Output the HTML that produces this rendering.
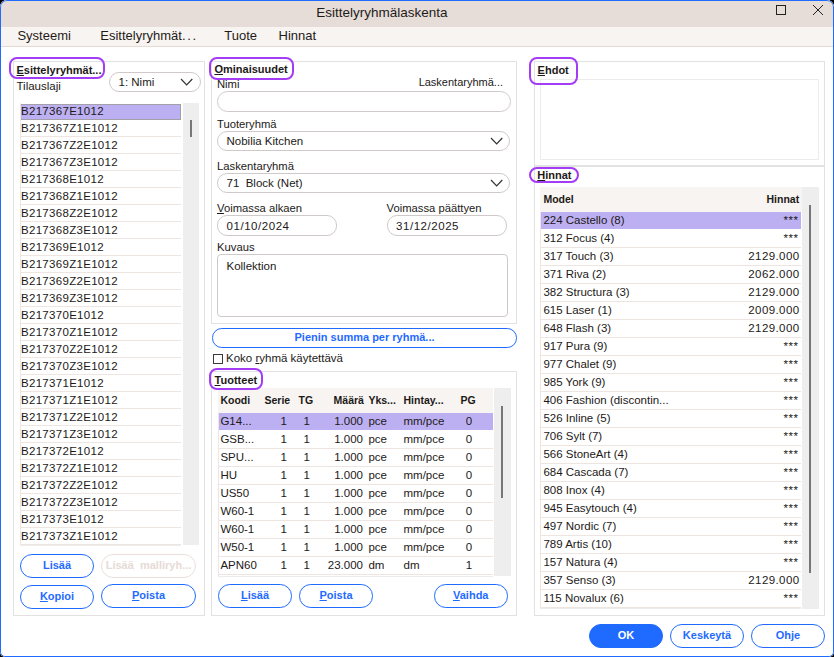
<!DOCTYPE html><html><head><meta charset="utf-8"><style>
html,body{margin:0;padding:0;background:#000;width:834px;height:657px;overflow:hidden}
#win{position:absolute;left:0;top:0;width:834px;height:657px;border-radius:7px 7px 5px 5px;background:#fff;overflow:hidden;font-family:"Liberation Sans",sans-serif}
#frame{position:absolute;left:0;top:0;width:834px;height:657px;box-sizing:border-box;border:1px solid #1f6bff;border-radius:7px 7px 5px 5px}
.t{position:absolute;white-space:nowrap;line-height:1}
.b{position:absolute;box-sizing:border-box}
u{text-decoration:underline;text-decoration-thickness:1px;text-underline-offset:1px}
</style></head><body><div id="win">
<div class="b" style="left:-1px;top:-1px;width:836px;height:28px;background:#e6ddd8"></div>
<div class="t " style="left:316.3px;top:5px;line-height:15px;font-size:13.5px;font-weight:normal;color:#1f1b19;">Esittelyryhmälaskenta</div>
<div class="b" style="left:776px;top:5px;width:10px;height:10px;border:1px solid #222"></div>
<svg class="b" style="left:812px;top:4px" width="12" height="12" viewBox="0 0 12 12"><path d="M1 1L11 11M11 1L1 11" stroke="#222" stroke-width="1"/></svg>
<div class="b" style="left:-1px;top:27px;width:836px;height:20px;background:#f8f4f1;border-bottom:1px solid #e6dad3"></div>
<div class="t " style="left:17.4px;top:28px;line-height:15px;font-size:13px;font-weight:normal;color:#1f1b19;">Systeemi</div>
<div class="t " style="left:100.3px;top:28px;line-height:15px;font-size:13px;font-weight:normal;color:#1f1b19;">Esittelyryhmät<span style="letter-spacing:1.6px">..</span>.</div>
<div class="t " style="left:224.3px;top:28px;line-height:15px;font-size:13px;font-weight:normal;color:#1f1b19;">Tuote</div>
<div class="t " style="left:278.6px;top:28px;line-height:15px;font-size:13px;font-weight:normal;color:#1f1b19;">Hinnat</div>
<div class="b" style="left:13px;top:61px;width:192px;height:555px;border:1px solid #e2e2e2"></div>
<div class="b" style="left:9px;top:57px;width:96px;height:22px;border:2px solid #a43cf5;border-radius:8px;z-index:5"></div>
<div class="t " style="left:16.5px;top:64px;line-height:12px;font-size:11px;font-weight:bold;color:#1c1917;"><u>E</u>sittelyryhmät...</div>
<div class="t " style="left:16.5px;top:80px;line-height:12px;font-size:11.5px;font-weight:normal;color:#1c1917;">Tilauslaji</div>
<div class="b" style="left:109px;top:72px;width:92px;height:20px;border:1px solid #cfcac7;border-radius:10px;background:#fff"></div>
<div class="t " style="left:118.5px;top:76px;line-height:12px;font-size:11.5px;font-weight:normal;color:#1c1917;">1: Nimi</div>
<svg class="b" style="left:179.2px;top:77.2px" width="15.3" height="9.8" viewBox="0 0 15.3 9.8"><path d="M2 2 L7.65 7.8 L13.3 2" fill="none" stroke="#333" stroke-width="1.2"/></svg>
<div class="b" style="left:20px;top:104px;width:161px;height:16px;background:#bdb0f2;border:1px solid #a3a0a8"></div>
<div class="t " style="left:21px;top:105px;line-height:12px;font-size:11.5px;font-weight:normal;color:#1c1917;letter-spacing:0.3px">B217367E1012</div>
<div class="b" style="left:20px;top:120px;width:161px;height:17px;border-bottom:1px solid #efe5e0"></div>
<div class="t " style="left:21px;top:122px;line-height:12px;font-size:11.5px;font-weight:normal;color:#1c1917;letter-spacing:0.3px">B217367Z1E1012</div>
<div class="b" style="left:20px;top:137px;width:161px;height:17px;border-bottom:1px solid #efe5e0"></div>
<div class="t " style="left:21px;top:139px;line-height:12px;font-size:11.5px;font-weight:normal;color:#1c1917;letter-spacing:0.3px">B217367Z2E1012</div>
<div class="b" style="left:20px;top:154px;width:161px;height:17px;border-bottom:1px solid #efe5e0"></div>
<div class="t " style="left:21px;top:156px;line-height:12px;font-size:11.5px;font-weight:normal;color:#1c1917;letter-spacing:0.3px">B217367Z3E1012</div>
<div class="b" style="left:20px;top:171px;width:161px;height:17px;border-bottom:1px solid #efe5e0"></div>
<div class="t " style="left:21px;top:173px;line-height:12px;font-size:11.5px;font-weight:normal;color:#1c1917;letter-spacing:0.3px">B217368E1012</div>
<div class="b" style="left:20px;top:188px;width:161px;height:17px;border-bottom:1px solid #efe5e0"></div>
<div class="t " style="left:21px;top:190px;line-height:12px;font-size:11.5px;font-weight:normal;color:#1c1917;letter-spacing:0.3px">B217368Z1E1012</div>
<div class="b" style="left:20px;top:205px;width:161px;height:17px;border-bottom:1px solid #efe5e0"></div>
<div class="t " style="left:21px;top:207px;line-height:12px;font-size:11.5px;font-weight:normal;color:#1c1917;letter-spacing:0.3px">B217368Z2E1012</div>
<div class="b" style="left:20px;top:222px;width:161px;height:17px;border-bottom:1px solid #efe5e0"></div>
<div class="t " style="left:21px;top:224px;line-height:12px;font-size:11.5px;font-weight:normal;color:#1c1917;letter-spacing:0.3px">B217368Z3E1012</div>
<div class="b" style="left:20px;top:239px;width:161px;height:17px;border-bottom:1px solid #efe5e0"></div>
<div class="t " style="left:21px;top:241px;line-height:12px;font-size:11.5px;font-weight:normal;color:#1c1917;letter-spacing:0.3px">B217369E1012</div>
<div class="b" style="left:20px;top:256px;width:161px;height:17px;border-bottom:1px solid #efe5e0"></div>
<div class="t " style="left:21px;top:258px;line-height:12px;font-size:11.5px;font-weight:normal;color:#1c1917;letter-spacing:0.3px">B217369Z1E1012</div>
<div class="b" style="left:20px;top:273px;width:161px;height:17px;border-bottom:1px solid #efe5e0"></div>
<div class="t " style="left:21px;top:275px;line-height:12px;font-size:11.5px;font-weight:normal;color:#1c1917;letter-spacing:0.3px">B217369Z2E1012</div>
<div class="b" style="left:20px;top:290px;width:161px;height:17px;border-bottom:1px solid #efe5e0"></div>
<div class="t " style="left:21px;top:292px;line-height:12px;font-size:11.5px;font-weight:normal;color:#1c1917;letter-spacing:0.3px">B217369Z3E1012</div>
<div class="b" style="left:20px;top:307px;width:161px;height:17px;border-bottom:1px solid #efe5e0"></div>
<div class="t " style="left:21px;top:309px;line-height:12px;font-size:11.5px;font-weight:normal;color:#1c1917;letter-spacing:0.3px">B217370E1012</div>
<div class="b" style="left:20px;top:324px;width:161px;height:17px;border-bottom:1px solid #efe5e0"></div>
<div class="t " style="left:21px;top:326px;line-height:12px;font-size:11.5px;font-weight:normal;color:#1c1917;letter-spacing:0.3px">B217370Z1E1012</div>
<div class="b" style="left:20px;top:341px;width:161px;height:17px;border-bottom:1px solid #efe5e0"></div>
<div class="t " style="left:21px;top:343px;line-height:12px;font-size:11.5px;font-weight:normal;color:#1c1917;letter-spacing:0.3px">B217370Z2E1012</div>
<div class="b" style="left:20px;top:358px;width:161px;height:17px;border-bottom:1px solid #efe5e0"></div>
<div class="t " style="left:21px;top:360px;line-height:12px;font-size:11.5px;font-weight:normal;color:#1c1917;letter-spacing:0.3px">B217370Z3E1012</div>
<div class="b" style="left:20px;top:375px;width:161px;height:17px;border-bottom:1px solid #efe5e0"></div>
<div class="t " style="left:21px;top:377px;line-height:12px;font-size:11.5px;font-weight:normal;color:#1c1917;letter-spacing:0.3px">B217371E1012</div>
<div class="b" style="left:20px;top:392px;width:161px;height:17px;border-bottom:1px solid #efe5e0"></div>
<div class="t " style="left:21px;top:394px;line-height:12px;font-size:11.5px;font-weight:normal;color:#1c1917;letter-spacing:0.3px">B217371Z1E1012</div>
<div class="b" style="left:20px;top:409px;width:161px;height:17px;border-bottom:1px solid #efe5e0"></div>
<div class="t " style="left:21px;top:411px;line-height:12px;font-size:11.5px;font-weight:normal;color:#1c1917;letter-spacing:0.3px">B217371Z2E1012</div>
<div class="b" style="left:20px;top:426px;width:161px;height:17px;border-bottom:1px solid #efe5e0"></div>
<div class="t " style="left:21px;top:428px;line-height:12px;font-size:11.5px;font-weight:normal;color:#1c1917;letter-spacing:0.3px">B217371Z3E1012</div>
<div class="b" style="left:20px;top:443px;width:161px;height:17px;border-bottom:1px solid #efe5e0"></div>
<div class="t " style="left:21px;top:445px;line-height:12px;font-size:11.5px;font-weight:normal;color:#1c1917;letter-spacing:0.3px">B217372E1012</div>
<div class="b" style="left:20px;top:460px;width:161px;height:17px;border-bottom:1px solid #efe5e0"></div>
<div class="t " style="left:21px;top:462px;line-height:12px;font-size:11.5px;font-weight:normal;color:#1c1917;letter-spacing:0.3px">B217372Z1E1012</div>
<div class="b" style="left:20px;top:477px;width:161px;height:17px;border-bottom:1px solid #efe5e0"></div>
<div class="t " style="left:21px;top:479px;line-height:12px;font-size:11.5px;font-weight:normal;color:#1c1917;letter-spacing:0.3px">B217372Z2E1012</div>
<div class="b" style="left:20px;top:494px;width:161px;height:17px;border-bottom:1px solid #efe5e0"></div>
<div class="t " style="left:21px;top:496px;line-height:12px;font-size:11.5px;font-weight:normal;color:#1c1917;letter-spacing:0.3px">B217372Z3E1012</div>
<div class="b" style="left:20px;top:511px;width:161px;height:17px;border-bottom:1px solid #efe5e0"></div>
<div class="t " style="left:21px;top:513px;line-height:12px;font-size:11.5px;font-weight:normal;color:#1c1917;letter-spacing:0.3px">B217373E1012</div>
<div class="b" style="left:20px;top:528px;width:161px;height:17px;border-bottom:1px solid #efe5e0"></div>
<div class="t " style="left:21px;top:530px;line-height:12px;font-size:11.5px;font-weight:normal;color:#1c1917;letter-spacing:0.3px">B217373Z1E1012</div>
<div class="b" style="left:20px;top:103px;width:1px;height:442px;background:#ede6e2"></div>
<div class="b" style="left:20px;top:545px;width:161px;height:1px;background:#ececec"></div>
<div class="b" style="left:183px;top:103px;width:16px;height:442px;background:#eeeeee"></div>
<div class="b" style="left:190px;top:120px;width:2px;height:17px;background:#777"></div>
<div class="b btn" style="left:20px;top:554px;width:74px;height:24px;border-radius:12.0px;background:#fff;border:1px solid #1f6bff;"></div>
<div class="t" style="left:-93.0px;width:300px;text-align:center;top:559px;line-height:12px;font-size:11px;font-weight:bold;color:#1f6bff;">Lisää</div>
<div class="b btn" style="left:101px;top:554px;width:95px;height:24px;border-radius:12.0px;background:#fff;border:1px solid #eadfd9;"></div>
<div class="t" style="left:-1.5px;width:300px;text-align:center;top:559px;line-height:12px;font-size:11px;font-weight:bold;color:#e6dbd5;">Lisää&nbsp; malliryh...</div>
<div class="b btn" style="left:20px;top:585px;width:74px;height:24px;border-radius:12.0px;background:#fff;border:1px solid #1f6bff;"></div>
<div class="t" style="left:-93.0px;width:300px;text-align:center;top:590px;line-height:12px;font-size:11px;font-weight:bold;color:#1f6bff;"><u>K</u>opioi</div>
<div class="b btn" style="left:101px;top:584px;width:95px;height:24px;border-radius:12.0px;background:#fff;border:1px solid #1f6bff;"></div>
<div class="t" style="left:-1.5px;width:300px;text-align:center;top:589px;line-height:12px;font-size:11px;font-weight:bold;color:#1f6bff;"><u>P</u>oista</div>
<div class="b" style="left:211px;top:61px;width:306px;height:263px;border:1px solid #e2e2e2"></div>
<div class="b" style="left:208.5px;top:57px;width:85px;height:23px;border:2px solid #a43cf5;border-radius:8px;z-index:5"></div>
<div class="t " style="left:214.4px;top:63px;line-height:12px;font-size:11px;font-weight:bold;color:#1c1917;"><u>O</u>minaisuudet</div>
<div class="t " style="left:217px;top:78px;line-height:12px;font-size:11.25px;font-weight:normal;color:#1c1917;">Nimi</div>
<div class="t" style="right:331px;top:76px;line-height:12px;font-size:11px;font-weight:normal;color:#1c1917;text-align:right;">Laskentaryhmä...</div>
<div class="b" style="left:217px;top:91px;width:294px;height:21px;border:1px solid #cfcac7;border-radius:10.5px"></div>
<div class="t " style="left:217px;top:118px;line-height:12px;font-size:11.25px;font-weight:normal;color:#1c1917;">Tuoteryhmä</div>
<div class="b" style="left:217px;top:131px;width:293px;height:20px;border:1px solid #cfcac7;border-radius:10px"></div>
<div class="t " style="left:226.5px;top:135px;line-height:12px;font-size:11.5px;font-weight:normal;color:#1c1917;">Nobilia Kitchen</div>
<svg class="b" style="left:488.5px;top:136.2px" width="15.3" height="9.8" viewBox="0 0 15.3 9.8"><path d="M2 2 L7.65 7.8 L13.3 2" fill="none" stroke="#333" stroke-width="1.2"/></svg>
<div class="t " style="left:217px;top:160px;line-height:12px;font-size:11.25px;font-weight:normal;color:#1c1917;">Laskentaryhmä</div>
<div class="b" style="left:217px;top:173px;width:293px;height:20px;border:1px solid #cfcac7;border-radius:10px"></div>
<div class="t " style="left:226.5px;top:177px;line-height:12px;font-size:11.5px;font-weight:normal;color:#1c1917;">71&nbsp; Block (Net)</div>
<svg class="b" style="left:488.5px;top:178.2px" width="15.3" height="9.8" viewBox="0 0 15.3 9.8"><path d="M2 2 L7.65 7.8 L13.3 2" fill="none" stroke="#333" stroke-width="1.2"/></svg>
<div class="t " style="left:217px;top:202px;line-height:12px;font-size:11.25px;font-weight:normal;color:#1c1917;"><u>V</u>oimassa alkaen</div>
<div class="t " style="left:386.5px;top:202px;line-height:12px;font-size:11.25px;font-weight:normal;color:#1c1917;">Voimassa päättyen</div>
<div class="b" style="left:217px;top:215px;width:119.5px;height:20.5px;border:1px solid #cfcac7;border-radius:10px"></div>
<div class="b" style="left:387px;top:215px;width:120px;height:20.5px;border:1px solid #cfcac7;border-radius:10px"></div>
<div class="t " style="left:226.5px;top:220px;line-height:12px;font-size:11.5px;font-weight:normal;color:#1c1917;letter-spacing:0.55px">01/10/2024</div>
<div class="t " style="left:396px;top:220px;line-height:12px;font-size:11.5px;font-weight:normal;color:#1c1917;letter-spacing:0.55px">31/12/2025</div>
<div class="t " style="left:217px;top:241px;line-height:12px;font-size:11.25px;font-weight:normal;color:#1c1917;">Kuvaus</div>
<div class="b" style="left:217px;top:254px;width:290.5px;height:62.5px;border:1px solid #cfcac7;border-radius:4px"></div>
<div class="t " style="left:226.5px;top:260px;line-height:12px;font-size:11.5px;font-weight:normal;color:#1c1917;">Kollektion</div>
<div class="b btn" style="left:212px;top:328px;width:305px;height:19.5px;border-radius:9.75px;background:#fff;border:1px solid #1f6bff;"></div>
<div class="t" style="left:214.5px;width:300px;text-align:center;top:331px;line-height:12px;font-size:11px;font-weight:bold;color:#1f6bff;">Pienin summa per ryhmä...</div>
<div class="b" style="left:213px;top:354px;width:10px;height:10px;border:1px solid #3a3a3a"></div>
<div class="t " style="left:226px;top:352px;line-height:12px;font-size:11.5px;font-weight:normal;color:#1c1917;">Koko <u>r</u>yhmä käytettävä</div>
<div class="b" style="left:211px;top:371px;width:306px;height:245px;border:1px solid #e2e2e2"></div>
<div class="b" style="left:208.5px;top:368px;width:54.5px;height:22px;border:2px solid #a43cf5;border-radius:8px;z-index:5"></div>
<div class="t " style="left:214.6px;top:374px;line-height:12px;font-size:11px;font-weight:bold;color:#1c1917;"><u>T</u>uotteet</div>
<div class="b" style="left:218px;top:388px;width:275px;height:25px;background:#f8f4f1"></div>
<div class="t " style="left:220.4px;top:394px;line-height:12px;font-size:10.5px;font-weight:bold;color:#1c1917;">Koodi</div>
<div class="t " style="left:264.5px;top:394px;line-height:12px;font-size:10.5px;font-weight:bold;color:#1c1917;">Serie</div>
<div class="t " style="left:298.5px;top:394px;line-height:12px;font-size:10.5px;font-weight:bold;color:#1c1917;">TG</div>
<div class="t " style="left:333.6px;top:394px;line-height:12px;font-size:10.5px;font-weight:bold;color:#1c1917;">Määrä</div>
<div class="t " style="left:368.4px;top:394px;line-height:12px;font-size:10.5px;font-weight:bold;color:#1c1917;">Yks...</div>
<div class="t " style="left:403.5px;top:394px;line-height:12px;font-size:10.5px;font-weight:bold;color:#1c1917;">Hintay...</div>
<div class="t " style="left:460.5px;top:394px;line-height:12px;font-size:10.5px;font-weight:bold;color:#1c1917;">PG</div>
<div class="b" style="left:218px;top:413px;width:275px;height:17px;background:#bdb0f2"></div>
<div class="t " style="left:220.4px;top:415px;line-height:12px;font-size:11.5px;font-weight:normal;color:#1c1917;">G14...</div>
<div class="t" style="right:547px;top:415px;line-height:12px;font-size:11.5px;font-weight:normal;color:#1c1917;text-align:right;">1</div>
<div class="t" style="right:524px;top:415px;line-height:12px;font-size:11.5px;font-weight:normal;color:#1c1917;text-align:right;">1</div>
<div class="t" style="right:471px;top:415px;line-height:12px;font-size:11.5px;font-weight:normal;color:#1c1917;text-align:right;">1.000</div>
<div class="t " style="left:368.4px;top:415px;line-height:12px;font-size:11.5px;font-weight:normal;color:#1c1917;">pce</div>
<div class="t " style="left:403.5px;top:415px;line-height:12px;font-size:11.5px;font-weight:normal;color:#1c1917;">mm/pce</div>
<div class="t" style="left:319px;width:300px;text-align:center;top:415px;line-height:12px;font-size:11.5px;font-weight:normal;color:#1c1917;">0</div>
<div class="b" style="left:218px;top:431px;width:275px;height:18px;border-bottom:1px solid #efe5e0"></div>
<div class="t " style="left:220.4px;top:433px;line-height:12px;font-size:11.5px;font-weight:normal;color:#1c1917;">GSB...</div>
<div class="t" style="right:547px;top:433px;line-height:12px;font-size:11.5px;font-weight:normal;color:#1c1917;text-align:right;">1</div>
<div class="t" style="right:524px;top:433px;line-height:12px;font-size:11.5px;font-weight:normal;color:#1c1917;text-align:right;">1</div>
<div class="t" style="right:471px;top:433px;line-height:12px;font-size:11.5px;font-weight:normal;color:#1c1917;text-align:right;">1.000</div>
<div class="t " style="left:368.4px;top:433px;line-height:12px;font-size:11.5px;font-weight:normal;color:#1c1917;">pce</div>
<div class="t " style="left:403.5px;top:433px;line-height:12px;font-size:11.5px;font-weight:normal;color:#1c1917;">mm/pce</div>
<div class="t" style="left:319px;width:300px;text-align:center;top:433px;line-height:12px;font-size:11.5px;font-weight:normal;color:#1c1917;">0</div>
<div class="b" style="left:218px;top:449px;width:275px;height:18px;border-bottom:1px solid #efe5e0"></div>
<div class="t " style="left:220.4px;top:451px;line-height:12px;font-size:11.5px;font-weight:normal;color:#1c1917;">SPU...</div>
<div class="t" style="right:547px;top:451px;line-height:12px;font-size:11.5px;font-weight:normal;color:#1c1917;text-align:right;">1</div>
<div class="t" style="right:524px;top:451px;line-height:12px;font-size:11.5px;font-weight:normal;color:#1c1917;text-align:right;">1</div>
<div class="t" style="right:471px;top:451px;line-height:12px;font-size:11.5px;font-weight:normal;color:#1c1917;text-align:right;">1.000</div>
<div class="t " style="left:368.4px;top:451px;line-height:12px;font-size:11.5px;font-weight:normal;color:#1c1917;">pce</div>
<div class="t " style="left:403.5px;top:451px;line-height:12px;font-size:11.5px;font-weight:normal;color:#1c1917;">mm/pce</div>
<div class="t" style="left:319px;width:300px;text-align:center;top:451px;line-height:12px;font-size:11.5px;font-weight:normal;color:#1c1917;">0</div>
<div class="b" style="left:218px;top:467px;width:275px;height:18px;border-bottom:1px solid #efe5e0"></div>
<div class="t " style="left:220.4px;top:469px;line-height:12px;font-size:11.5px;font-weight:normal;color:#1c1917;">HU</div>
<div class="t" style="right:547px;top:469px;line-height:12px;font-size:11.5px;font-weight:normal;color:#1c1917;text-align:right;">1</div>
<div class="t" style="right:524px;top:469px;line-height:12px;font-size:11.5px;font-weight:normal;color:#1c1917;text-align:right;">1</div>
<div class="t" style="right:471px;top:469px;line-height:12px;font-size:11.5px;font-weight:normal;color:#1c1917;text-align:right;">1.000</div>
<div class="t " style="left:368.4px;top:469px;line-height:12px;font-size:11.5px;font-weight:normal;color:#1c1917;">pce</div>
<div class="t " style="left:403.5px;top:469px;line-height:12px;font-size:11.5px;font-weight:normal;color:#1c1917;">mm/pce</div>
<div class="t" style="left:319px;width:300px;text-align:center;top:469px;line-height:12px;font-size:11.5px;font-weight:normal;color:#1c1917;">0</div>
<div class="b" style="left:218px;top:485px;width:275px;height:18px;border-bottom:1px solid #efe5e0"></div>
<div class="t " style="left:220.4px;top:487px;line-height:12px;font-size:11.5px;font-weight:normal;color:#1c1917;">US50</div>
<div class="t" style="right:547px;top:487px;line-height:12px;font-size:11.5px;font-weight:normal;color:#1c1917;text-align:right;">1</div>
<div class="t" style="right:524px;top:487px;line-height:12px;font-size:11.5px;font-weight:normal;color:#1c1917;text-align:right;">1</div>
<div class="t" style="right:471px;top:487px;line-height:12px;font-size:11.5px;font-weight:normal;color:#1c1917;text-align:right;">1.000</div>
<div class="t " style="left:368.4px;top:487px;line-height:12px;font-size:11.5px;font-weight:normal;color:#1c1917;">pce</div>
<div class="t " style="left:403.5px;top:487px;line-height:12px;font-size:11.5px;font-weight:normal;color:#1c1917;">mm/pce</div>
<div class="t" style="left:319px;width:300px;text-align:center;top:487px;line-height:12px;font-size:11.5px;font-weight:normal;color:#1c1917;">0</div>
<div class="b" style="left:218px;top:503px;width:275px;height:18px;border-bottom:1px solid #efe5e0"></div>
<div class="t " style="left:220.4px;top:505px;line-height:12px;font-size:11.5px;font-weight:normal;color:#1c1917;">W60-1</div>
<div class="t" style="right:547px;top:505px;line-height:12px;font-size:11.5px;font-weight:normal;color:#1c1917;text-align:right;">1</div>
<div class="t" style="right:524px;top:505px;line-height:12px;font-size:11.5px;font-weight:normal;color:#1c1917;text-align:right;">1</div>
<div class="t" style="right:471px;top:505px;line-height:12px;font-size:11.5px;font-weight:normal;color:#1c1917;text-align:right;">1.000</div>
<div class="t " style="left:368.4px;top:505px;line-height:12px;font-size:11.5px;font-weight:normal;color:#1c1917;">pce</div>
<div class="t " style="left:403.5px;top:505px;line-height:12px;font-size:11.5px;font-weight:normal;color:#1c1917;">mm/pce</div>
<div class="t" style="left:319px;width:300px;text-align:center;top:505px;line-height:12px;font-size:11.5px;font-weight:normal;color:#1c1917;">0</div>
<div class="b" style="left:218px;top:521px;width:275px;height:18px;border-bottom:1px solid #efe5e0"></div>
<div class="t " style="left:220.4px;top:523px;line-height:12px;font-size:11.5px;font-weight:normal;color:#1c1917;">W60-1</div>
<div class="t" style="right:547px;top:523px;line-height:12px;font-size:11.5px;font-weight:normal;color:#1c1917;text-align:right;">1</div>
<div class="t" style="right:524px;top:523px;line-height:12px;font-size:11.5px;font-weight:normal;color:#1c1917;text-align:right;">1</div>
<div class="t" style="right:471px;top:523px;line-height:12px;font-size:11.5px;font-weight:normal;color:#1c1917;text-align:right;">1.000</div>
<div class="t " style="left:368.4px;top:523px;line-height:12px;font-size:11.5px;font-weight:normal;color:#1c1917;">pce</div>
<div class="t " style="left:403.5px;top:523px;line-height:12px;font-size:11.5px;font-weight:normal;color:#1c1917;">mm/pce</div>
<div class="t" style="left:319px;width:300px;text-align:center;top:523px;line-height:12px;font-size:11.5px;font-weight:normal;color:#1c1917;">0</div>
<div class="b" style="left:218px;top:539px;width:275px;height:18px;border-bottom:1px solid #efe5e0"></div>
<div class="t " style="left:220.4px;top:541px;line-height:12px;font-size:11.5px;font-weight:normal;color:#1c1917;">W50-1</div>
<div class="t" style="right:547px;top:541px;line-height:12px;font-size:11.5px;font-weight:normal;color:#1c1917;text-align:right;">1</div>
<div class="t" style="right:524px;top:541px;line-height:12px;font-size:11.5px;font-weight:normal;color:#1c1917;text-align:right;">1</div>
<div class="t" style="right:471px;top:541px;line-height:12px;font-size:11.5px;font-weight:normal;color:#1c1917;text-align:right;">1.000</div>
<div class="t " style="left:368.4px;top:541px;line-height:12px;font-size:11.5px;font-weight:normal;color:#1c1917;">pce</div>
<div class="t " style="left:403.5px;top:541px;line-height:12px;font-size:11.5px;font-weight:normal;color:#1c1917;">mm/pce</div>
<div class="t" style="left:319px;width:300px;text-align:center;top:541px;line-height:12px;font-size:11.5px;font-weight:normal;color:#1c1917;">0</div>
<div class="b" style="left:218px;top:557px;width:275px;height:18px;border-bottom:1px solid #efe5e0"></div>
<div class="t " style="left:220.4px;top:559px;line-height:12px;font-size:11.5px;font-weight:normal;color:#1c1917;">APN60</div>
<div class="t" style="right:547px;top:559px;line-height:12px;font-size:11.5px;font-weight:normal;color:#1c1917;text-align:right;">1</div>
<div class="t" style="right:524px;top:559px;line-height:12px;font-size:11.5px;font-weight:normal;color:#1c1917;text-align:right;">1</div>
<div class="t" style="right:471px;top:559px;line-height:12px;font-size:11.5px;font-weight:normal;color:#1c1917;text-align:right;">23.000</div>
<div class="t " style="left:368.4px;top:559px;line-height:12px;font-size:11.5px;font-weight:normal;color:#1c1917;">dm</div>
<div class="t " style="left:403.5px;top:559px;line-height:12px;font-size:11.5px;font-weight:normal;color:#1c1917;">dm</div>
<div class="t" style="left:319px;width:300px;text-align:center;top:559px;line-height:12px;font-size:11.5px;font-weight:normal;color:#1c1917;">1</div>
<div class="b" style="left:494px;top:388px;width:17px;height:188px;background:#eeeeee"></div>
<div class="b" style="left:218px;top:413px;width:1px;height:163px;background:#ede6e2"></div>
<div class="b" style="left:218px;top:576px;width:275px;height:1px;background:#ececec"></div>
<div class="b" style="left:501px;top:406px;width:2px;height:92px;background:#777"></div>
<div class="b btn" style="left:218px;top:584px;width:74px;height:23.5px;border-radius:11.75px;background:#fff;border:1px solid #1f6bff;"></div>
<div class="t" style="left:105.0px;width:300px;text-align:center;top:589px;line-height:12px;font-size:11px;font-weight:bold;color:#1f6bff;"><u>L</u>isää</div>
<div class="b btn" style="left:299px;top:584px;width:74px;height:23.5px;border-radius:11.75px;background:#fff;border:1px solid #1f6bff;"></div>
<div class="t" style="left:186.0px;width:300px;text-align:center;top:589px;line-height:12px;font-size:11px;font-weight:bold;color:#1f6bff;"><u>P</u>oista</div>
<div class="b btn" style="left:434px;top:584px;width:73.5px;height:23.5px;border-radius:11.75px;background:#fff;border:1px solid #1f6bff;"></div>
<div class="t" style="left:320.75px;width:300px;text-align:center;top:589px;line-height:12px;font-size:11px;font-weight:bold;color:#1f6bff;"><u>V</u>aihda</div>
<div class="b" style="left:534px;top:61px;width:291px;height:105px;border:1px solid #e2e2e2"></div>
<div class="b" style="left:529px;top:57px;width:48.5px;height:28px;border:2px solid #a43cf5;border-radius:8px;z-index:5"></div>
<div class="t " style="left:537.6px;top:64px;line-height:12px;font-size:11px;font-weight:bold;color:#1c1917;"><u>E</u>hdot</div>
<div class="b" style="left:540px;top:79px;width:279px;height:81px;border:1px solid #ececec"></div>
<div class="b" style="left:534px;top:166px;width:291px;height:450px;border:1px solid #e2e2e2"></div>
<div class="b" style="left:529px;top:166.5px;width:50px;height:16.5px;border:2px solid #a43cf5;border-radius:8.25px;z-index:5"></div>
<div class="t " style="left:537.3px;top:169px;line-height:12px;font-size:11px;font-weight:bold;color:#1c1917;"><u>H</u>innat</div>
<div class="b" style="left:540px;top:187px;width:262px;height:25px;background:#f8f4f1"></div>
<div class="t " style="left:543.4px;top:193px;line-height:12px;font-size:10.5px;font-weight:bold;color:#1c1917;">Model</div>
<div class="t" style="right:34.799999999999955px;top:193px;line-height:12px;font-size:10.5px;font-weight:bold;color:#1c1917;text-align:right;">Hinnat</div>
<div class="b" style="left:540px;top:212px;width:261px;height:17px;background:#bdb0f2"></div>
<div class="t " style="left:543.4px;top:214px;line-height:12px;font-size:11.5px;font-weight:normal;color:#1c1917;">224 Castello (8)</div>
<div class="t" style="right:35.5px;top:214px;line-height:12px;font-size:11.5px;font-weight:normal;color:#1c1917;text-align:right;letter-spacing:0.5px">***</div>
<div class="b" style="left:540px;top:230px;width:261px;height:18px;border-bottom:1px solid #efe5e0"></div>
<div class="t " style="left:543.4px;top:232px;line-height:12px;font-size:11.5px;font-weight:normal;color:#1c1917;">312 Focus (4)</div>
<div class="t" style="right:35.5px;top:232px;line-height:12px;font-size:11.5px;font-weight:normal;color:#1c1917;text-align:right;letter-spacing:0.5px">***</div>
<div class="b" style="left:540px;top:248px;width:261px;height:18px;border-bottom:1px solid #efe5e0"></div>
<div class="t " style="left:543.4px;top:250px;line-height:12px;font-size:11.5px;font-weight:normal;color:#1c1917;">317 Touch (3)</div>
<div class="t" style="right:34.5px;top:250px;line-height:12px;font-size:11.5px;font-weight:normal;color:#1c1917;text-align:right;letter-spacing:0.4px">2129.000</div>
<div class="b" style="left:540px;top:266px;width:261px;height:18px;border-bottom:1px solid #efe5e0"></div>
<div class="t " style="left:543.4px;top:268px;line-height:12px;font-size:11.5px;font-weight:normal;color:#1c1917;">371 Riva (2)</div>
<div class="t" style="right:34.5px;top:268px;line-height:12px;font-size:11.5px;font-weight:normal;color:#1c1917;text-align:right;letter-spacing:0.4px">2062.000</div>
<div class="b" style="left:540px;top:284px;width:261px;height:18px;border-bottom:1px solid #efe5e0"></div>
<div class="t " style="left:543.4px;top:286px;line-height:12px;font-size:11.5px;font-weight:normal;color:#1c1917;">382 Structura (3)</div>
<div class="t" style="right:34.5px;top:286px;line-height:12px;font-size:11.5px;font-weight:normal;color:#1c1917;text-align:right;letter-spacing:0.4px">2129.000</div>
<div class="b" style="left:540px;top:302px;width:261px;height:18px;border-bottom:1px solid #efe5e0"></div>
<div class="t " style="left:543.4px;top:304px;line-height:12px;font-size:11.5px;font-weight:normal;color:#1c1917;">615 Laser (1)</div>
<div class="t" style="right:34.5px;top:304px;line-height:12px;font-size:11.5px;font-weight:normal;color:#1c1917;text-align:right;letter-spacing:0.4px">2009.000</div>
<div class="b" style="left:540px;top:320px;width:261px;height:18px;border-bottom:1px solid #efe5e0"></div>
<div class="t " style="left:543.4px;top:322px;line-height:12px;font-size:11.5px;font-weight:normal;color:#1c1917;">648 Flash (3)</div>
<div class="t" style="right:34.5px;top:322px;line-height:12px;font-size:11.5px;font-weight:normal;color:#1c1917;text-align:right;letter-spacing:0.4px">2129.000</div>
<div class="b" style="left:540px;top:338px;width:261px;height:18px;border-bottom:1px solid #efe5e0"></div>
<div class="t " style="left:543.4px;top:340px;line-height:12px;font-size:11.5px;font-weight:normal;color:#1c1917;">917 Pura (9)</div>
<div class="t" style="right:35.5px;top:340px;line-height:12px;font-size:11.5px;font-weight:normal;color:#1c1917;text-align:right;letter-spacing:0.5px">***</div>
<div class="b" style="left:540px;top:356px;width:261px;height:18px;border-bottom:1px solid #efe5e0"></div>
<div class="t " style="left:543.4px;top:358px;line-height:12px;font-size:11.5px;font-weight:normal;color:#1c1917;">977 Chalet (9)</div>
<div class="t" style="right:35.5px;top:358px;line-height:12px;font-size:11.5px;font-weight:normal;color:#1c1917;text-align:right;letter-spacing:0.5px">***</div>
<div class="b" style="left:540px;top:374px;width:261px;height:18px;border-bottom:1px solid #efe5e0"></div>
<div class="t " style="left:543.4px;top:376px;line-height:12px;font-size:11.5px;font-weight:normal;color:#1c1917;">985 York (9)</div>
<div class="t" style="right:35.5px;top:376px;line-height:12px;font-size:11.5px;font-weight:normal;color:#1c1917;text-align:right;letter-spacing:0.5px">***</div>
<div class="b" style="left:540px;top:392px;width:261px;height:18px;border-bottom:1px solid #efe5e0"></div>
<div class="t " style="left:543.4px;top:394px;line-height:12px;font-size:11.5px;font-weight:normal;color:#1c1917;">406 Fashion (discontin...</div>
<div class="t" style="right:35.5px;top:394px;line-height:12px;font-size:11.5px;font-weight:normal;color:#1c1917;text-align:right;letter-spacing:0.5px">***</div>
<div class="b" style="left:540px;top:410px;width:261px;height:18px;border-bottom:1px solid #efe5e0"></div>
<div class="t " style="left:543.4px;top:412px;line-height:12px;font-size:11.5px;font-weight:normal;color:#1c1917;">526 Inline (5)</div>
<div class="t" style="right:35.5px;top:412px;line-height:12px;font-size:11.5px;font-weight:normal;color:#1c1917;text-align:right;letter-spacing:0.5px">***</div>
<div class="b" style="left:540px;top:428px;width:261px;height:18px;border-bottom:1px solid #efe5e0"></div>
<div class="t " style="left:543.4px;top:430px;line-height:12px;font-size:11.5px;font-weight:normal;color:#1c1917;">706 Sylt (7)</div>
<div class="t" style="right:35.5px;top:430px;line-height:12px;font-size:11.5px;font-weight:normal;color:#1c1917;text-align:right;letter-spacing:0.5px">***</div>
<div class="b" style="left:540px;top:446px;width:261px;height:18px;border-bottom:1px solid #efe5e0"></div>
<div class="t " style="left:543.4px;top:448px;line-height:12px;font-size:11.5px;font-weight:normal;color:#1c1917;">566 StoneArt (4)</div>
<div class="t" style="right:35.5px;top:448px;line-height:12px;font-size:11.5px;font-weight:normal;color:#1c1917;text-align:right;letter-spacing:0.5px">***</div>
<div class="b" style="left:540px;top:464px;width:261px;height:18px;border-bottom:1px solid #efe5e0"></div>
<div class="t " style="left:543.4px;top:466px;line-height:12px;font-size:11.5px;font-weight:normal;color:#1c1917;">684 Cascada (7)</div>
<div class="t" style="right:35.5px;top:466px;line-height:12px;font-size:11.5px;font-weight:normal;color:#1c1917;text-align:right;letter-spacing:0.5px">***</div>
<div class="b" style="left:540px;top:482px;width:261px;height:18px;border-bottom:1px solid #efe5e0"></div>
<div class="t " style="left:543.4px;top:484px;line-height:12px;font-size:11.5px;font-weight:normal;color:#1c1917;">808 Inox (4)</div>
<div class="t" style="right:35.5px;top:484px;line-height:12px;font-size:11.5px;font-weight:normal;color:#1c1917;text-align:right;letter-spacing:0.5px">***</div>
<div class="b" style="left:540px;top:500px;width:261px;height:18px;border-bottom:1px solid #efe5e0"></div>
<div class="t " style="left:543.4px;top:502px;line-height:12px;font-size:11.5px;font-weight:normal;color:#1c1917;">945 Easytouch (4)</div>
<div class="t" style="right:35.5px;top:502px;line-height:12px;font-size:11.5px;font-weight:normal;color:#1c1917;text-align:right;letter-spacing:0.5px">***</div>
<div class="b" style="left:540px;top:518px;width:261px;height:18px;border-bottom:1px solid #efe5e0"></div>
<div class="t " style="left:543.4px;top:520px;line-height:12px;font-size:11.5px;font-weight:normal;color:#1c1917;">497 Nordic (7)</div>
<div class="t" style="right:35.5px;top:520px;line-height:12px;font-size:11.5px;font-weight:normal;color:#1c1917;text-align:right;letter-spacing:0.5px">***</div>
<div class="b" style="left:540px;top:536px;width:261px;height:18px;border-bottom:1px solid #efe5e0"></div>
<div class="t " style="left:543.4px;top:538px;line-height:12px;font-size:11.5px;font-weight:normal;color:#1c1917;">789 Artis (10)</div>
<div class="t" style="right:35.5px;top:538px;line-height:12px;font-size:11.5px;font-weight:normal;color:#1c1917;text-align:right;letter-spacing:0.5px">***</div>
<div class="b" style="left:540px;top:554px;width:261px;height:18px;border-bottom:1px solid #efe5e0"></div>
<div class="t " style="left:543.4px;top:556px;line-height:12px;font-size:11.5px;font-weight:normal;color:#1c1917;">157 Natura (4)</div>
<div class="t" style="right:35.5px;top:556px;line-height:12px;font-size:11.5px;font-weight:normal;color:#1c1917;text-align:right;letter-spacing:0.5px">***</div>
<div class="b" style="left:540px;top:572px;width:261px;height:18px;border-bottom:1px solid #efe5e0"></div>
<div class="t " style="left:543.4px;top:574px;line-height:12px;font-size:11.5px;font-weight:normal;color:#1c1917;">357 Senso (3)</div>
<div class="t" style="right:34.5px;top:574px;line-height:12px;font-size:11.5px;font-weight:normal;color:#1c1917;text-align:right;letter-spacing:0.4px">2129.000</div>
<div class="b" style="left:540px;top:590px;width:261px;height:18px;border-bottom:1px solid #efe5e0"></div>
<div class="t " style="left:543.4px;top:592px;line-height:12px;font-size:11.5px;font-weight:normal;color:#1c1917;">115 Novalux (6)</div>
<div class="t" style="right:35.5px;top:592px;line-height:12px;font-size:11.5px;font-weight:normal;color:#1c1917;text-align:right;letter-spacing:0.5px">***</div>
<div class="b" style="left:802px;top:187px;width:17px;height:422px;background:#eeeeee"></div>
<div class="b" style="left:540px;top:212px;width:1px;height:396px;background:#ede6e2"></div>
<div class="b" style="left:540px;top:608px;width:261px;height:1px;background:#ececec"></div>
<div class="b" style="left:809px;top:205px;width:2px;height:368px;background:#777"></div>
<div class="b btn" style="left:589px;top:624px;width:74px;height:24px;border-radius:12.0px;background:#1f6bff;border:1px solid #1f6bff;"></div>
<div class="t" style="left:476.0px;width:300px;text-align:center;top:629px;line-height:12px;font-size:11px;font-weight:bold;color:#fff;">OK</div>
<div class="b btn" style="left:670px;top:624px;width:74px;height:24px;border-radius:12.0px;background:#fff;border:1px solid #1f6bff;"></div>
<div class="t" style="left:557.0px;width:300px;text-align:center;top:629px;line-height:12px;font-size:11px;font-weight:bold;color:#1f6bff;">Keskeytä</div>
<div class="b btn" style="left:751px;top:624px;width:74px;height:24px;border-radius:12.0px;background:#fff;border:1px solid #1f6bff;"></div>
<div class="t" style="left:638.0px;width:300px;text-align:center;top:629px;line-height:12px;font-size:11px;font-weight:bold;color:#1f6bff;">Ohje</div>
<div id="frame"></div></div></body></html>
